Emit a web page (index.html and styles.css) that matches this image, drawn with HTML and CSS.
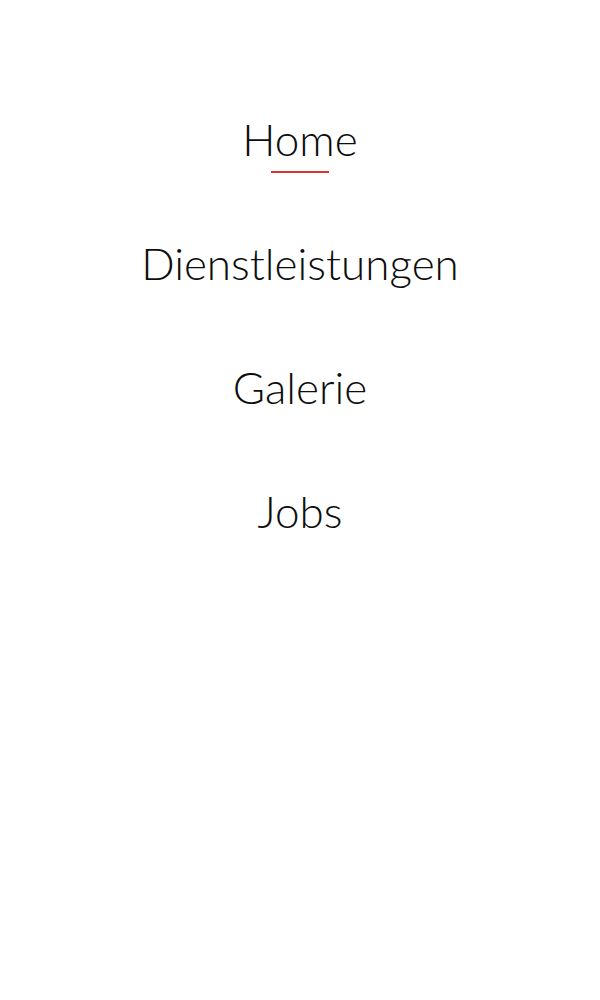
FILE: index.html
```html
<!DOCTYPE html>
<html lang="de">
<head>
<meta charset="utf-8">
<title>Menu</title>
<link rel="stylesheet" href="styles.css">
</head>
<body>
<nav class="menu">
  <ul class="menu-list">
    <li class="menu-item"><a class="menu-link active" href="#">Home</a></li>
    <li class="menu-item"><a class="menu-link" href="#">Dienstleistungen</a></li>
    <li class="menu-item"><a class="menu-link" href="#">Galerie</a></li>
    <li class="menu-item"><a class="menu-link" href="#">Jobs</a></li>
  </ul>
</nav>
</body>
</html>
```
FILE: styles.css
```css
html, body {
  margin: 0;
  padding: 0;
  background: #ffffff;
}
.menu {
  padding-top: 77px;
}
.menu-list {
  list-style: none;
  margin: 0;
  padding: 0;
  display: flex;
  flex-direction: column;
}
.menu-item {
  height: 124px;
  display: flex;
  align-items: center;
  justify-content: center;
}
.menu-link {
  position: relative;
  font-family: Lato, "Noto Sans", sans-serif;
  font-weight: 300;
  font-size: 44px;
  line-height: 1;
  color: #0d0d0d;
  text-decoration: none;
}
.menu-link.active::after {
  content: "";
  position: absolute;
  left: 50%;
  top: calc(100% + 10px);
  width: 58px;
  height: 2px;
  margin-left: -29px;
  background: #d9342b;
}
```
